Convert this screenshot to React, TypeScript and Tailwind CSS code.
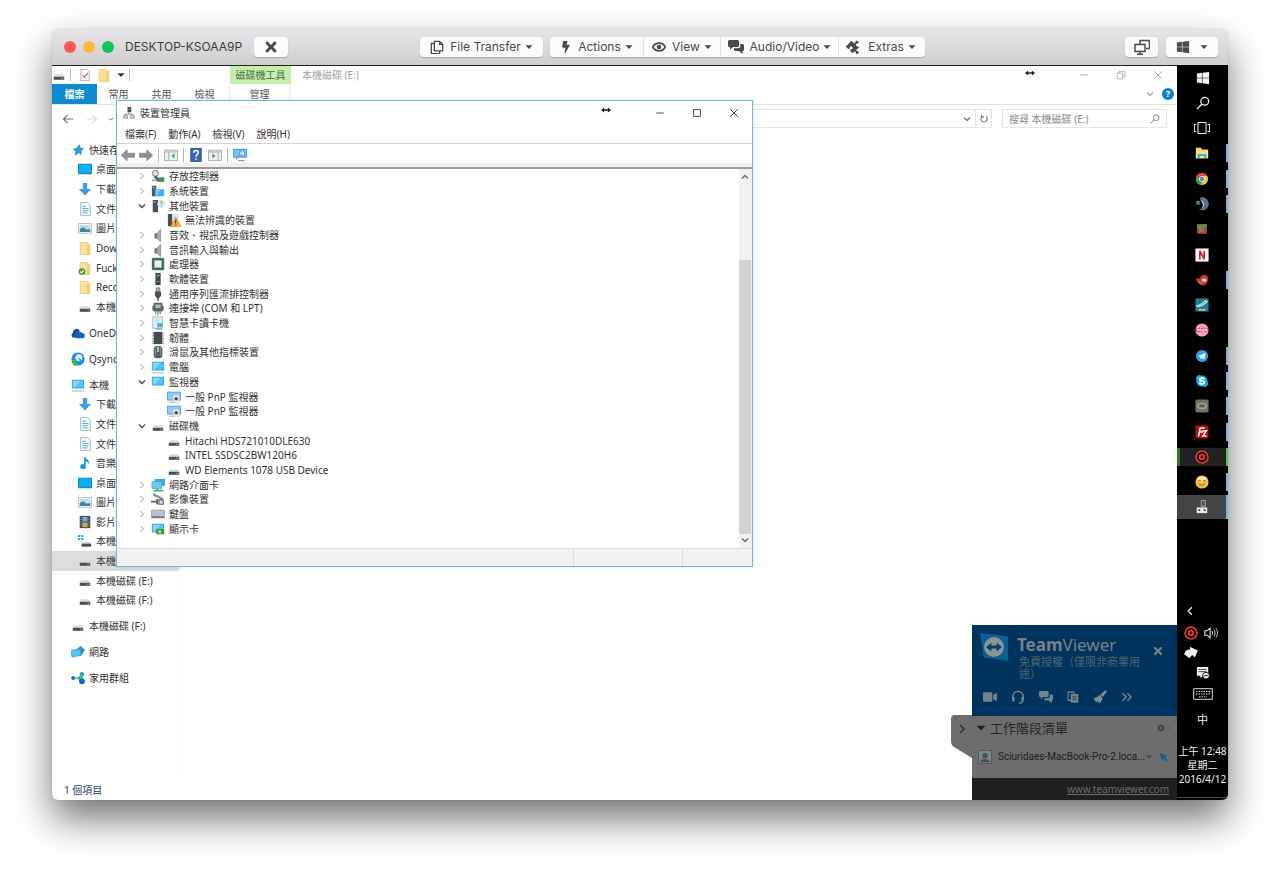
import React from "react";
import { FaBolt, FaPuzzlePiece, FaTimes, FaWindows, FaVideo, FaSkype } from "react-icons/fa";

type IconProps = { name: string; className?: string };

const screen = (
  <>
    <path d="M1 2h14v10H1z" fill="#2f9fd0" />
    <path d="M2 3h12v8H2z" fill="#56c4f2" />
    <path d="M2 3h9L4 11H2z" fill="#7fd6f8" />
  </>
);
const drive = (
  <>
    <path d="M3.500 7h9l1.500 3H2z" fill="#d8dcda" />
    <path d="M2 10h12v3.500H2z" fill="#4a504d" />
    <path d="M10.500 11h2.500v1.200h-2.500z" fill="#6fc08a" />
  </>
);
const folder = (
  <>
    <path d="M2 1h9v2h3v13H2z" fill="#f0cf76" />
    <path d="M3 2h7v13H3z" fill="#fbe29a" />
  </>
);
const page = (
  <>
    <path d="M3 .5h8l3 3v12H3z" fill="#f6fafc" stroke="#9db4c0" />
    <path d="M5 5h4M5 7.500h7M5 10h7M5 12.500h6" stroke="#3ea3d8" />
  </>
);
const speaker = (
  <>
    <path d="M4 6h3v6H4z" fill="#777" />
    <path d="M7 6l4-4.500v14L7 12z" fill="#a9adb0" stroke="#777" strokeWidth=".7" />
  </>
);
const arrowDown = <path d="M5.500 1h5v7H15l-7 7.500L1 8h4.500z" fill="#3d9ddd" />;
const redRing = (
  <>
    <circle cx="8" cy="8" r="6.800" fill="#240606" stroke="#e23b3b" strokeWidth="1.800" />
    <circle cx="8" cy="8" r="2.500" fill="none" stroke="#e23b3b" strokeWidth="1.800" />
    <path d="M8 4v1.500M8 10.500V12M4.500 6l1.300.8M10.200 9.200l1.300.8M4.500 10l1.300-.8M10.200 6.800l1.300-.8" stroke="#e23b3b" strokeWidth="1.200" />
  </>
);

const art: Record<string, React.ReactNode> = {
  star: <path d="M9.500 1l1.500 4.500 4 .5-3 3 .5 5L9 11.500 4 14.500l1-5-3.500-3L6 6z" fill="#2b9be0" />,
  desktop: (
    <>
      <path d="M0 2h16v12H0z" fill="#0a8fd0" />
      <path d="M1 3h14v9H1z" fill="#0fb0f3" />
    </>
  ),
  download: arrowDown,
  page,
  picture: (
    <>
      <path d="M.5 3h15v11H.5z" fill="#fff" stroke="#a8b4bc" />
      <path d="M2 4.500h12v8H2z" fill="#b9dcf0" />
      <path d="M2 12.500V9l4-2 4 3 4-1v3.500z" fill="#4c7f9c" />
    </>
  ),
  folder,
  folderCheck: (
    <>
      {folder}
      <circle cx="4.500" cy="12" r="3.800" fill="#2f9e3c" />
      <path d="M2.500 12l1.500 1.500L6.500 10.500" stroke="#fff" strokeWidth="1.300" fill="none" />
    </>
  ),
  drive,
  winDrive: (
    <>
      <path d="M0 1h2.500v2.500H0zM3.500 1H6v2.500H3.500zM0 4.500h2.500V7H0zM3.500 4.500H6V7H3.500z" fill="#22b5ea" />
      <path d="M5 9h8l2 2H4z" fill="#d8dcda" />
      <path d="M4 11h11v3.500H4z" fill="#4a504d" />
    </>
  ),
  onedrive: (
    <>
      <path d="M2 13a3 3 0 0 1 0-5 4.500 4.500 0 0 1 8-3L5 13z" fill="#0d4fa0" />
      <path d="M6 14a2.800 2.800 0 0 1 0-5.500 3.600 3.600 0 0 1 6.500-.5A3 3 0 0 1 13 14z" fill="#1a63b8" />
    </>
  ),
  qsync: (
    <>
      <circle cx="8" cy="8" r="7.500" fill="#1893d4" />
      <circle cx="9" cy="6.500" r="4" fill="#dff3fb" />
      <path d="M1 9h6l-2 2 3 3-3 2c-3-1-4-4-4-7z" fill="#43b449" />
      <path d="M8 6l4 3-1 3z" fill="#1893d4" />
    </>
  ),
  computer: (
    <>
      {screen}
      <path d="M1 14h14v1.500H1z" fill="#b8c4ca" />
    </>
  ),
  monitor: screen,
  music: <path d="M7 1l1.500 0c1 3 5 3.500 4 8.500-.5-2-2-3-3.500-3.200V12a3.200 2.800 0 1 1-2-2.500z" fill="#1c9ce0" />,
  film: (
    <>
      <path d="M2 1h12v14H2z" fill="#3a4148" />
      <path d="M5 2h6v5.500H5z" fill="#6fa9d6" />
      <path d="M5 8.500h6V14H5z" fill="#c9a860" />
      <path d="M3.500 2v12M12.500 2v12" stroke="#ddd" strokeDasharray="1 1.500" />
    </>
  ),
  network: (
    <>
      <path d="M6 5l5-4 5 4.500-4 6.500H7z" fill="#3c8fb8" />
      <path d="M0 6l11-1.500V12L1 14z" fill="#56c4f2" stroke="#2f8fc0" strokeWidth=".6" />
    </>
  ),
  homegroup: (
    <>
      <path d="M2.500 8h4" stroke="#27a8d8" strokeWidth="1.500" />
      <circle cx="2.500" cy="8" r="2.300" fill="#1b74c8" />
      <circle cx="12.500" cy="3.500" r="2.500" fill="#1f9ad6" />
      <path d="M6 8.500l7-6 1 10z" fill="#3fc46a" />
      <circle cx="12.500" cy="11.800" r="3.300" fill="#1668c0" />
    </>
  ),
  storage: (
    <>
      <circle cx="5" cy="5" r="3.500" fill="#dfe6e2" stroke="#65706a" />
      <path d="M3 9l3-2 2 3 7-.5v5H8z" fill="#4f6b56" />
      <path d="M9 10h6v4H9z" fill="#3d9448" />
      <path d="M1 12h6v2H1z" fill="#9aa39e" />
    </>
  ),
  system: (
    <>
      <path d="M1 2h5v12H1z" fill="#4d5a60" />
      <path d="M2 3h2v2H2z" fill="#77e090" />
      <path d="M5 6h10v8H5z" fill="#42b3ea" />
      <path d="M5 6h6l-5 8H5z" fill="#76cef5" />
    </>
  ),
  unknown: (
    <>
      <path d="M2 1h6v14H2z" fill="#495156" />
      <path d="M3 2.500h2v1.500H3z" fill="#9fe0a8" />
      <circle cx="11.500" cy="5.500" r="4" fill="#e7f1f7" stroke="#b8cad4" strokeWidth=".7" />
      <path d="M10.500 4.500c0-1.500 2.300-1.500 2.200 0 0 .8-1 .8-1 1.800M11.700 7.300v.8" stroke="#3d7fae" fill="none" strokeWidth=".9" />
    </>
  ),
  warning: (
    <>
      <path d="M1 1h5v14H1z" fill="#495156" />
      <circle cx="10" cy="4.500" r="3.800" fill="#dfeaf1" />
      <path d="M10 4.500L16 15.500H4z" fill="#f2b53a" stroke="#8a6414" strokeWidth=".5" />
      <path d="M10 8v4M10 13v1.200" stroke="#222" strokeWidth="1.200" />
    </>
  ),
  speaker,
  cpu: (
    <>
      <path d="M1.500 1.500h13v13h-13z" fill="#2f6b4c" stroke="#3f5f50" />
      <path d="M4 4h8v8H4z" fill="#eef4ee" stroke="#9db8a6" />
    </>
  ),
  software: (
    <>
      <path d="M5 1h6v14H5z" fill="#3d4748" />
      <path d="M6.500 3h3v2h-3z" fill="#72b48a" />
      <path d="M6.500 11h3" stroke="#889" />
    </>
  ),
  usb: (
    <>
      <path d="M6 1h4v4H6z" fill="#aab0b2" stroke="#555" strokeWidth=".7" />
      <path d="M4.500 5h7v5L9 13H7l-2.500-3z" fill="#4b5053" />
      <path d="M8 12v4" stroke="#4b5053" strokeWidth="1.500" />
    </>
  ),
  port: (
    <>
      <path d="M3 2h10v3l1.500 1v4l-2 2h-9l-2-2V6L3 5z" fill="#5d6365" />
      <path d="M5 4h6v4H5z" fill="#b6bcbe" />
      <path d="M5.500 12v3M8 12v4M10.500 12v3" stroke="#4b5053" />
    </>
  ),
  card: (
    <>
      <path d="M2 1h11v13H2z" fill="#e4edf1" stroke="#a9b8c0" />
      <path d="M4 3h5v4H4z" fill="#c9e0ec" />
      <path d="M7 8h6v5H7z" fill="#46b4e6" />
      <path d="M5 14h8v1.500H5z" fill="#8ea0a8" />
    </>
  ),
  firmware: (
    <>
      <path d="M3 1h10v14H3z" fill="#454c4f" />
      <path d="M1 2.500h2M13 2.500h2M1 5.500h2M13 5.500h2M1 8.500h2M13 8.500h2M1 11.500h2M13 11.500h2M1 14h2M13 14h2" stroke="#7c8487" />
    </>
  ),
  mouse: (
    <>
      <rect x="3" y="1" width="10" height="14" rx="4" fill="#596065" />
      <path d="M8 2v6" stroke="#d8e2e8" strokeWidth="1.600" />
      <path d="M5 3v9M11 3v9" stroke="#8f999f" />
    </>
  ),
  pnp: (
    <>
      <path d="M.5 2.500h15v9H.5z" fill="#8ccff0" stroke="#4b9fc9" />
      <path d="M7 6h7v8H7z" fill="#eef2f4" stroke="#a8b6be" strokeWidth=".6" />
      <circle cx="10.500" cy="10" r="2" fill="#5a3f3c" />
      <path d="M2 14h6" stroke="#9db0ba" />
    </>
  ),
  netcard: (
    <>
      <path d="M4 1h12v8H4z" fill="#3fa9de" />
      <path d="M1 4h11v8H1z" fill="#6bcaf3" stroke="#2f8fc0" strokeWidth=".6" />
      <path d="M7 12v2.500M3 14.500h11" stroke="#40b874" strokeWidth="2" />
    </>
  ),
  camera: (
    <>
      <path d="M3 1l11 6-1 2L2 4z" fill="#8b9194" />
      <path d="M0 10h6v2H0zM6 8h2v6H6z" fill="#5b6164" />
      <path d="M9 9h5v5H9z" fill="#d7dbdd" stroke="#5b6164" strokeWidth="1.200" />
    </>
  ),
  keyboard: (
    <>
      <path d="M.5 3.500h15v9H.5z" fill="#b7c1c8" stroke="#8f9ba3" strokeWidth=".8" />
      <path d="M1 10.500h14v2H1z" fill="#6f7b83" />
    </>
  ),
  display: (
    <>
      {screen}
      <path d="M6 8h9v6H6z" fill="#3f8f4a" />
      <circle cx="10" cy="11" r="2" fill="#c9d66a" />
    </>
  ),
  devmgr: (
    <>
      <path d="M6 0h5v7H6z" fill="#444a4d" />
      <path d="M8 7v3M3 11v-1.500h10V11" stroke="#777" fill="none" />
      <path d="M1 11h5v4H1zM10 11h5v4h-5z" fill="#c7cdd0" stroke="#777" strokeWidth=".7" />
      <path d="M7 3h2" stroke="#8fd0a0" />
    </>
  ),
  back: <path d="M7 2v4h8.500v4.500H7v4L.5 8.200z" fill="#8e9194" stroke="#7b7e80" strokeWidth=".8" />,
  forward: <path d="M9 2v4H.5v4.500H9v4l6.500-6.300z" fill="#8e9194" stroke="#7b7e80" strokeWidth=".8" />,
  panelLeft: (
    <>
      <path d="M.5 2.500h15v12H.5z" fill="#eef1f3" stroke="#9aa4ab" />
      <path d="M1 4.500h14M5.500 5v9" stroke="#9aa4ab" />
      <path d="M12 6v6L8.500 9z" fill="#3da64a" />
    </>
  ),
  panelRight: (
    <>
      <path d="M.5 2.500h15v12H.5z" fill="#eef1f3" stroke="#9aa4ab" />
      <path d="M1 4.500h14M11.500 5v9" stroke="#9aa4ab" />
      <path d="M5 6v6l3.500-3z" fill="#3da64a" />
    </>
  ),
  help: (
    <>
      <path d="M2 .5h12v15H2z" fill="#3a68b8" stroke="#26498c" />
      <path d="M5.500 5.500c0-3.500 5-3.500 5-.4C10.500 7.500 8 7.500 8 10M8 11.800v1.700" stroke="#fff" strokeWidth="1.700" fill="none" />
    </>
  ),
  scan: (
    <>
      <path d="M.5 1.500h15v9H.5z" fill="#6cc6ef" stroke="#3b92bd" />
      <circle cx="10.500" cy="6" r="3" fill="#b9e6fa" stroke="#5d99b5" />
      <path d="M8 8l-4.500 5M6 14.500h7" stroke="#8b9ba4" strokeWidth="1.500" />
    </>
  ),
  check: (
    <>
      <path d="M2.500.5h8l3 3v12h-11z" fill="#fff" stroke="#9a9a9a" />
      <path d="M5 8l2.500 3L12 5.500" stroke="#e0674f" strokeWidth="1.600" fill="none" />
    </>
  ),
  search: (
    <>
      <circle cx="10" cy="6" r="4.500" fill="none" stroke="currentColor" strokeWidth="1.400" />
      <path d="M6.800 9.200L1 15" stroke="currentColor" strokeWidth="1.600" />
    </>
  ),
  refresh: <path d="M11.500 4A5 5 0 1 1 4.500 4.200M4 1v4h4" stroke="currentColor" strokeWidth="1.700" fill="none" />,
  taskview: <path d="M4 2.500h8v11H4zM2.500 4.500H.5v7h2M13.500 4.500h2v7h-2" stroke="#ddd" strokeWidth="1.100" fill="none" />,
  explorer: (
    <>
      <path d="M1 2h6l1 2h7v10H1z" fill="#f7d36b" />
      <path d="M1 6h14v8H1z" fill="#fde08a" />
      <path d="M3 14V9h10v5h-2.500v-2.500h-5V14z" fill="#25b5dc" />
    </>
  ),
  chrome: (
    <>
      <circle cx="8" cy="8" r="7" fill="#f2c32e" />
      <path d="M1.900 4.600A7 7 0 0 1 14.100 4.600H8L5 9.700z" fill="#de4a3c" />
      <path d="M1.900 4.600L5 9.800 8 11l-1 3.900A7 7 0 0 1 1.900 4.600z" fill="#35a355" />
      <circle cx="8" cy="8" r="3.200" fill="#fff" />
      <circle cx="8" cy="8" r="2.500" fill="#4a8af0" />
    </>
  ),
  steam: (
    <>
      <path d="M5 1a7.500 7.500 0 1 1-1 13c6 0 7-5 1-13z" fill="#52748c" />
      <path d="M6 3.500a5 5 0 0 1 1 9.500c3-2 3-6-1-9.500z" fill="#d8e6ee" />
      <circle cx="3.500" cy="6.500" r="2.500" fill="#3c7c78" />
    </>
  ),
  block: (
    <>
      <path d="M2.500 2.500h11v11h-11z" fill="#8c5a45" />
      <path d="M2.500 2.500h11v4l-2.500-1-2 2-3-1-3.500 1z" fill="#6a8f4a" />
      <path d="M5 7h5v4H5z" fill="#b56a58" />
    </>
  ),
  netflix: (
    <>
      <path d="M.5.5h15v15H.5z" fill="#fff" />
      <path d="M5.500 13V3l5 10V3" stroke="#d81f2a" strokeWidth="2" fill="none" />
    </>
  ),
  bird: (
    <>
      <path d="M1 5c2 2 4 2 5 0 1-4 8-4 9 0s-2 9-6 9-7-4-8-9z" fill="#c93a2e" />
      <path d="M8 7c3-2 5 0 5 1.500s-3 1.500-5 .5z" fill="#f4e6e0" />
      <path d="M3 10l5 1" stroke="#f08a70" />
    </>
  ),
  tool: (
    <>
      <path d="M.5.5h15v15H.5z" fill="#1d7f8e" />
      <path d="M2 9l5-2 5-4 2 1-5 4-5 2z" stroke="#e5f4f6" strokeWidth="1.200" fill="none" />
      <path d="M4 13.500h8" stroke="#d7b99a" strokeWidth="2" />
    </>
  ),
  pink: (
    <>
      <circle cx="8" cy="8" r="7.500" fill="#f3a3c4" />
      <path d="M1 5.500h14v5H1z" fill="#e2447f" />
      <path d="M3 9.500v-3l1.500 2 1.500-2v3M8 6.500v3h1.500v-3M11.500 9.500v-3l2 3v-3" stroke="#fff" fill="none" />
    </>
  ),
  telegram: (
    <>
      <circle cx="8" cy="8" r="7" fill="#2aa6de" />
      <path d="M3.500 8L12 4.500 10.500 12 8 10l-1.500 1.500-.5-2.500z" fill="#fff" />
    </>
  ),
  gray: (
    <>
      <rect x=".5" y=".5" width="15" height="15" rx="2" fill="#6d746e" />
      <path d="M3 8c1-4 9-4 10 0-1 4-9 4-10 0z" fill="none" stroke="#9bb06f" strokeWidth="1.500" />
      <path d="M5 8.500l2-1.500L9 8.500l2-1.500" stroke="#3d4638" fill="none" />
    </>
  ),
  filezilla: (
    <>
      <path d="M.5.5h15v15H.5z" fill="#b80f0f" />
      <path d="M4 13L6 3.500h5M5 8h4M8.500 6.500H13l-4 6h4" stroke="#fff" strokeWidth="1.800" fill="none" />
    </>
  ),
  ring: redRing,
  smile: (
    <>
      <circle cx="8" cy="8" r="7.500" fill="#f2bf4a" />
      <ellipse cx="8" cy="4.500" rx="5" ry="3" fill="#fbe3a0" />
      <path d="M4 6.500h2.500M9.500 6.500H12M4.500 10c2 2.200 5 2.200 7 0" stroke="#8a5a18" strokeWidth="1.100" fill="none" />
    </>
  ),
  devmgrLight: (
    <>
      <path d="M7 .5h5v7H7z" fill="#5a5a5a" stroke="#bbb" strokeWidth=".8" />
      <path d="M2 8.500h12v6.500H2z" fill="#e8e8e8" />
      <path d="M4 10.500h2v2H4zM10 10.500h2v2h-2z" fill="#333" />
    </>
  ),
  volume: (
    <>
      <path d="M1 5.500h2.500L7 2.500v11L3.500 10.500H1z" fill="none" stroke="#eee" strokeWidth="1.200" />
      <path d="M9 5.500c1 1.500 1 3.500 0 5M11.300 4c1.800 2.500 1.800 5.500 0 8M13.500 2.500c2.500 3.500 2.500 7.500 0 11" fill="none" stroke="#eee" />
    </>
  ),
  share: <path d="M1 9c1-3 4-4.500 7-4.500L7.500 2 15 5.500 12 12l-1.500-2.500C8 9.500 7 11 6.500 13z" fill="#f2f2f2" stroke="#f2f2f2" strokeWidth="1.500" strokeLinejoin="round" />,
  note: (
    <>
      <path d="M1 1h13v10H8l-3 3v-3H1z" fill="#eee" />
      <path d="M3 4h9M3 6.500h9" stroke="#333" />
      <circle cx="11.500" cy="11" r="3.800" fill="#eee" stroke="#000" />
      <path d="M9.500 11h4" stroke="#000" />
    </>
  ),
  docs: <path d="M5 1.500h6l3.500 3.500v7.500H5zM11 1.500V5h3.500M5 4H1.500v11.500H11v-3" stroke="#4a4a4a" strokeWidth="1.500" fill="none" />,
  eye: (
    <>
      <path d="M.8 8C4 2.200 12 2.200 15.200 8 12 13.800 4 13.800.8 8z" fill="none" stroke="#4a4a4a" strokeWidth="1.900" />
      <circle cx="8" cy="8" r="2.600" fill="#4a4a4a" />
    </>
  ),
  chat: (
    <>
      <path d="M1.500 1h8A1.500 1.500 0 0 1 11 2.500v4A1.500 1.500 0 0 1 9.500 8H5L2 10.500V8H1.500A1.500 1.500 0 0 1 0 6.500v-4A1.500 1.500 0 0 1 1.500 1z" fill="currentColor" />
      <path d="M12.300 5h2.200A1.500 1.500 0 0 1 16 6.500v4a1.500 1.500 0 0 1-1.500 1.500V15L11 12H7.500A1.500 1.500 0 0 1 6 10.500V9.300h4.300a2 2 0 0 0 2-2z" fill="currentColor" />
    </>
  ),
  screens: (
    <>
      <path d="M6 5V1.500h9.500v8H12" stroke="#4a4a4a" strokeWidth="1.500" fill="none" />
      <path d="M1 5.500h10v7H1z" stroke="#4a4a4a" strokeWidth="1.500" fill="none" />
      <path d="M6 12.500V15M3 15.200h6" stroke="#4a4a4a" strokeWidth="1.500" />
    </>
  ),
  headset: (
    <>
      <path d="M2 10V7.500a6 6 0 0 1 12 0V10M13.500 11c0 2.500-2 4-4.500 4" stroke="#808a92" strokeWidth="1.500" fill="none" />
      <path d="M1 8h3v5H2zM12 8h3l-1 5h-2z" fill="#808a92" />
    </>
  ),
  files: (
    <>
      <path d="M1.500 1.500h8v11h-8z" fill="none" stroke="#808a92" strokeWidth="1.400" />
      <path d="M5 4h10v11.500H5z" fill="#808a92" />
      <path d="M7 7h6M7 9.500h6M7 12h6" stroke="#00345d" />
    </>
  ),
  brush: (
    <>
      <path d="M14 0l2 2-5 6-2.500-2.500z" fill="#808a92" />
      <path d="M7.500 5.500l3.500 3.500-1.500 4L7 15.500 5 12l-1 2.500L.5 9.500 5 8z" fill="#808a92" />
    </>
  ),
  tv: (
    <>
      <path d="M0 0l14 1.500 2 .5v14L2 14z" fill="#0a5e92" />
      <circle cx="8" cy="8" r="5.700" fill="#8d9498" />
      <path d="M3.500 8l3-2.500v1.700h3V5.500l3 2.500-3 2.500V8.800h-3v1.700z" fill="#06406c" />
    </>
  ),
  gear: (
    <>
      <circle cx="8" cy="8" r="4" fill="none" stroke="#2d4252" strokeWidth="3" />
      <path d="M8 0v3M8 13v3M0 8h3M13 8h3M2.500 2.500l2 2M11.500 11.500l2 2M2.500 13.500l2-2M11.500 4.500l2-2" stroke="#2d4252" strokeWidth="2" />
    </>
  ),
  user: (
    <>
      <path d="M.5.5h15v15H.5z" fill="#7b8484" stroke="#4c5656" />
      <circle cx="8" cy="6.500" r="3" fill="#455155" />
      <path d="M2.500 14c0-5 11-5 11 0z" fill="#455155" />
    </>
  ),
  cursor: <path d="M1 2l12 4-4 2 5 5-2 2-5-5-2 4z" fill="#0f5f96" />,
  resize: <path d="M0 8l5-4v2.700h6V4l5 4-5 4V9.300H5V12z" fill="#222" />,
  minimize: <path d="M2 8h12" stroke="currentColor" strokeWidth="1.500" />,
  maximize: <path d="M2.500 2.500h11v11h-11z" stroke="currentColor" strokeWidth="1.500" fill="none" />,
  restore: <path d="M2 5h8.500v9H2zM5 5V2h9v9h-3.500" stroke="currentColor" strokeWidth="1.400" fill="none" />,
  close: <path d="M2 2l12 12M14 2L2 14" stroke="currentColor" strokeWidth="1.600" />,
  chevDown: <path d="M2 5l6 6 6-6" stroke="currentColor" strokeWidth="2.500" fill="none" />,
  chevUp: <path d="M2 11l6-6 6 6" stroke="currentColor" strokeWidth="2.500" fill="none" />,
  chevRight: <path d="M5 2l6 6-6 6" stroke="currentColor" strokeWidth="1.800" fill="none" />,
  chevLeft: <path d="M11 2L5 8l6 6" stroke="currentColor" strokeWidth="1.800" fill="none" />,
  caret: <path d="M1 4.500h14L8 12z" fill="currentColor" />,
  arrowLeft: <path d="M15 8H2M7.500 2.500L2 8l5.500 5.500" stroke="currentColor" strokeWidth="1.600" fill="none" />,
  arrowRight: <path d="M1 8h13M8.500 2.500L14 8l-5.500 5.500" stroke="currentColor" strokeWidth="1.600" fill="none" />,
  double: <path d="M2 3l5 5-5 5M8.500 3l5 5-5 5" stroke="#808a92" strokeWidth="1.600" fill="none" />,
};

function Icon({ name, className = "size-3.5" }: IconProps) {
  return (
    <svg viewBox="0 0 16 16" aria-hidden="true" className={`shrink-0 ${className}`}>
      {art[name]}
    </svg>
  );
}

const toolButton = "flex h-5 items-center justify-center bg-[#fbfbfb] text-[12px] text-[#4a4a4a]";

function ToolMenu({ icon, label, className }: { icon: React.ReactNode; label: string; className: string }) {
  return (
    <button type="button" className={`${toolButton} ${className}`}>
      {icon}
      <span className="ml-1.5">{label}</span>
      <Icon name="caret" className="ml-1 size-2" />
    </button>
  );
}

function TitleBar() {
  return (
    <header className="flex h-9 items-center bg-linear-to-b from-[#e7e5e7] to-[#cfcdcf] font-['Inter','Noto_Sans_CJK_TC',sans-serif]">
      <div className="flex w-[368px] items-center">
        <div className="ml-3 flex gap-[7px]">
          <button type="button" aria-label="Close window" className="size-3 rounded-full bg-[#fc5753]" />
          <button type="button" aria-label="Minimize window" className="size-3 rounded-full bg-[#fdb73e]" />
          <button type="button" aria-label="Zoom window" className="size-3 rounded-full bg-[#13c550]" />
        </div>
        <h1 className="ml-[11px] w-[129px] text-[12px] whitespace-nowrap text-[#3c3c3c]">DESKTOP-KSOAA9P</h1>
        <button type="button" aria-label="Disconnect" className={`${toolButton} w-[34px] rounded-sm shadow-[0_1px_1px_rgba(0,0,0,0.2)]`}>
          <FaTimes className="size-4" />
        </button>
      </div>
      <div className="flex gap-[7px]">
        <ToolMenu icon={<Icon name="docs" />} label="File Transfer" className="w-[123px] rounded-sm shadow-[0_1px_1px_rgba(0,0,0,0.2)]" />
        <div className="flex divide-x divide-[#e2e2e2] overflow-hidden rounded-sm shadow-[0_1px_1px_rgba(0,0,0,0.2)]">
          <ToolMenu icon={<FaBolt className="size-3" />} label="Actions" className="w-[94px]" />
          <ToolMenu icon={<Icon name="eye" />} label="View" className="w-[77px]" />
          <ToolMenu icon={<Icon name="chat" className="size-4" />} label="Audio/Video" className="w-[118px]" />
          <ToolMenu icon={<FaPuzzlePiece className="size-3.5 rotate-45" />} label="Extras" className="w-[86px]" />
        </div>
      </div>
      <div className="mr-2.5 ml-auto flex gap-2">
        <button type="button" aria-label="Monitors" className={`${toolButton} w-[33px] rounded-sm shadow-[0_1px_1px_rgba(0,0,0,0.2)]`}>
          <Icon name="screens" className="size-4" />
        </button>
        <button type="button" aria-label="Windows keys" className={`${toolButton} w-[52px] gap-2.5 rounded-sm shadow-[0_1px_1px_rgba(0,0,0,0.2)]`}>
          <FaWindows className="size-3.5" />
          <Icon name="caret" className="size-2" />
        </button>
      </div>
    </header>
  );
}

type NavEntry = { icon: string; label: string; selected?: boolean };

const quick: NavEntry[] = [
  { icon: "desktop", label: "桌面" },
  { icon: "download", label: "下載" },
  { icon: "page", label: "文件" },
  { icon: "picture", label: "圖片" },
  { icon: "folder", label: "Down" },
  { icon: "folderCheck", label: "Fuck" },
  { icon: "folder", label: "Reco" },
  { icon: "drive", label: "本機" },
];
const local: NavEntry[] = [
  { icon: "download", label: "下載" },
  { icon: "page", label: "文件" },
  { icon: "page", label: "文件" },
  { icon: "music", label: "音樂" },
  { icon: "desktop", label: "桌面" },
  { icon: "picture", label: "圖片" },
  { icon: "film", label: "影片" },
  { icon: "winDrive", label: "本機" },
  { icon: "drive", label: "本機", selected: true },
  { icon: "drive", label: "本機磁碟 (E:)" },
  { icon: "drive", label: "本機磁碟 (F:)" },
];

function NavRow({ entry, child }: { entry: NavEntry; child?: boolean }) {
  return (
    <a
      href="#"
      className={`flex items-center gap-1 whitespace-nowrap ${child ? "pl-[26px]" : "h-5 pl-[19px]"} ${entry.selected ? "bg-[#dcdcdc]" : ""}`}
    >
      <Icon name={entry.icon} />
      {entry.label}
    </a>
  );
}

function NavPane() {
  return (
    <nav className="flex w-[130px] flex-col border-r border-[#f4f4f4] pt-2 pr-0.5">
      <div className="grid h-[177px] auto-rows-fr">
        <NavRow entry={{ icon: "star", label: "快速存取" }} />
        {quick.map((e, i) => (
          <NavRow key={i} entry={e} child />
        ))}
      </div>
      <div className="my-1.5 flex flex-col gap-1.5">
        <NavRow entry={{ icon: "onedrive", label: "OneDrive" }} />
        <NavRow entry={{ icon: "qsync", label: "Qsync" }} />
      </div>
      <div className="grid h-[235px] auto-rows-fr">
        <NavRow entry={{ icon: "computer", label: "本機" }} />
        {local.map((e, i) => (
          <NavRow key={i} entry={e} child />
        ))}
      </div>
      <div className="my-1.5 flex flex-col gap-1.5">
        <NavRow entry={{ icon: "drive", label: "本機磁碟 (F:)" }} />
        <NavRow entry={{ icon: "network", label: "網路" }} />
        <NavRow entry={{ icon: "homegroup", label: "家用群組" }} />
      </div>
    </nav>
  );
}

function ExplorerWindow() {
  return (
    <section className="flex flex-1 flex-col">
      <div className="flex h-[18px] items-center">
        <Icon name="drive" className="size-3.5" />
        <span className="mr-2 ml-1 h-3 w-px bg-[#bbb]" />
        <Icon name="check" className="size-3" />
        <Icon name="folder" className="ml-1.5 size-3.5" />
        <Icon name="caret" className="ml-1.5 size-2 text-[#333]" />
        <span className="ml-1 h-3 w-px bg-[#bbb]" />
        <span className="ml-[100px] flex h-full w-[61px] items-center justify-center bg-[#c5eeae] text-[#4f6a43]">磁碟機工具</span>
        <span className="ml-[11px] text-[#a3a3a3]">本機磁碟 (E:)</span>
        <div className="mr-3.5 ml-auto flex items-center text-[#aaa]">
          <Icon name="resize" className="mr-[30px] mb-1 size-2.5" />
          <button type="button" aria-label="最小化" className="flex w-[37px] justify-center"><Icon name="minimize" className="size-2.5" /></button>
          <button type="button" aria-label="還原" className="flex w-[37px] justify-center"><Icon name="restore" className="size-2.5" /></button>
          <button type="button" aria-label="關閉" className="ml-3.5 flex justify-center"><Icon name="close" className="size-2.5" /></button>
        </div>
      </div>
      <div className="flex h-[21px] items-stretch border-b border-[#dfe5ea] text-[#555]">
        <button type="button" className="w-[45px] bg-[#0e8ad0] font-bold text-white">檔案</button>
        <button type="button" className="w-[43px]">常用</button>
        <button type="button" className="w-[43px]">共用</button>
        <button type="button" className="w-[43px]">檢視</button>
        <button type="button" className="ml-[3px] w-[61px] border-x border-[#e8ece6]">管理</button>
        <div className="mr-[3px] ml-auto flex items-center gap-2">
          <Icon name="chevDown" className="size-2 text-[#aaa]" />
          <button type="button" aria-label="說明" className="flex size-3 items-center justify-center rounded-full bg-[#0f7fc7] text-[9px] font-bold text-white">?</button>
        </div>
      </div>
      <div className="flex h-[27px] items-center pr-2.5 text-[#777]">
        <button type="button" aria-label="上一頁" className="ml-2.5"><Icon name="arrowLeft" className="size-3" /></button>
        <button type="button" aria-label="下一頁" className="ml-3 text-[#ddd]"><Icon name="arrowRight" className="size-3" /></button>
        <Icon name="chevDown" className="ml-2.5 size-1.5" />
        <div className="ml-3 flex h-[19px] flex-1 items-center justify-end border border-[#e6e6e6]">
          <Icon name="chevDown" className="mr-1 size-2" />
          <button type="button" aria-label="重新整理" className="flex h-full w-4 items-center justify-center border-l border-[#e6e6e6]"><Icon name="refresh" className="size-2.5" /></button>
        </div>
        <label className="ml-2.5 flex h-[19px] w-[165px] items-center border border-[#e6e6e6] px-1.5">
          <input type="text" aria-label="搜尋" placeholder="搜尋 本機磁碟 (E:)" className="min-w-0 flex-1 outline-none placeholder:text-[#8a8a8a]" />
          <Icon name="search" className="size-2.5" />
        </label>
      </div>
      <div className="flex flex-1">
        <NavPane />
        <main className="flex-1" />
      </div>
      <footer className="flex h-[20px] items-center pl-3 text-[#2b4468]">1 個項目</footer>
    </section>
  );
}

type Device = { icon: string; label: string; open?: boolean; child?: boolean };

const devices: Device[] = [
  { icon: "storage", label: "存放控制器" },
  { icon: "system", label: "系統裝置" },
  { icon: "unknown", label: "其他裝置", open: true },
  { icon: "warning", label: "無法辨識的裝置", child: true },
  { icon: "speaker", label: "音效、視訊及遊戲控制器" },
  { icon: "speaker", label: "音訊輸入與輸出" },
  { icon: "cpu", label: "處理器" },
  { icon: "software", label: "軟體裝置" },
  { icon: "usb", label: "通用序列匯流排控制器" },
  { icon: "port", label: "連接埠 (COM 和 LPT)" },
  { icon: "card", label: "智慧卡讀卡機" },
  { icon: "firmware", label: "韌體" },
  { icon: "mouse", label: "滑鼠及其他指標裝置" },
  { icon: "computer", label: "電腦" },
  { icon: "monitor", label: "監視器", open: true },
  { icon: "pnp", label: "一般 PnP 監視器", child: true },
  { icon: "pnp", label: "一般 PnP 監視器", child: true },
  { icon: "drive", label: "磁碟機", open: true },
  { icon: "drive", label: "Hitachi HDS721010DLE630", child: true },
  { icon: "drive", label: "INTEL SSDSC2BW120H6", child: true },
  { icon: "drive", label: "WD Elements 1078 USB Device", child: true },
  { icon: "netcard", label: "網路介面卡" },
  { icon: "camera", label: "影像裝置" },
  { icon: "keyboard", label: "鍵盤" },
  { icon: "display", label: "顯示卡" },
];

function DeviceManager() {
  return (
    <section className="absolute top-[34px] left-16 flex h-[467px] w-[637px] flex-col border border-[#6cbbdc] bg-white text-[#333] shadow-[0_0_4px_rgba(0,0,0,0.12)]">
      <div className="flex h-6 items-center">
        <Icon name="devmgr" className="ml-1.5 size-3" />
        <h2 className="ml-[5px]">裝置管理員</h2>
        <div className="ml-auto flex items-center text-[#444]">
          <Icon name="resize" className="mr-[30px] mb-1.5 size-2.5" />
          <button type="button" aria-label="最小化" className="flex w-[37px] justify-center"><Icon name="minimize" className="size-2.5" /></button>
          <button type="button" aria-label="最大化" className="flex w-[37px] justify-center"><Icon name="maximize" className="size-2.5" /></button>
          <button type="button" aria-label="關閉" className="flex w-[37px] justify-center"><Icon name="close" className="size-2.5" /></button>
        </div>
      </div>
      <div className="flex h-[19px] items-center gap-3 border-b border-[#d5d5d5] pl-2">
        <button type="button">檔案(F)</button>
        <button type="button">動作(A)</button>
        <button type="button">檢視(V)</button>
        <button type="button">說明(H)</button>
      </div>
      <div className="flex h-[19px] items-center pt-0.5 pl-1">
        <button type="button" aria-label="上一步"><Icon name="back" /></button>
        <button type="button" aria-label="下一步" className="ml-1"><Icon name="forward" /></button>
        <span className="ml-[5px] h-3.5 w-px bg-[#b5b5b5]" />
        <button type="button" aria-label="顯示主控台樹狀目錄" className="ml-[5px]"><Icon name="panelLeft" /></button>
        <span className="ml-[5px] h-3.5 w-px bg-[#b5b5b5]" />
        <button type="button" aria-label="說明" className="ml-[5px]"><Icon name="help" /></button>
        <button type="button" aria-label="顯示動作窗格" className="ml-[5px]"><Icon name="panelRight" /></button>
        <span className="ml-[5px] h-3.5 w-px bg-[#b5b5b5]" />
        <button type="button" aria-label="掃描硬體變更" className="ml-[5px]"><Icon name="scan" /></button>
      </div>
      <div className="h-1.5 border-b-2 border-[#9b9b9b] bg-[#f0f0f0]" />
      <div className="flex flex-1 border-r border-[#f0f0f0]">
        <ul className="grid h-[367px] flex-1 auto-rows-fr">
          {devices.map((d, i) => (
            <li key={i} className={`flex items-center gap-1 whitespace-nowrap ${d.child ? "pl-[50px]" : "pl-[21px]"}`}>
              {!d.child && (
                <Icon name={d.open ? "chevDown" : "chevRight"} className={d.open ? "mr-px size-2 text-[#444]" : "mr-px size-2 text-[#888]"} />
              )}
              <Icon name={d.icon} />
              {d.label}
            </li>
          ))}
        </ul>
        <div className="flex w-3 flex-col items-center bg-[#f1f1f1] py-1 text-[#666]">
          <Icon name="chevUp" className="size-2" />
          <div className="mt-[79px] mb-0.5 w-full flex-1 bg-[#d2d2d2]" />
          <Icon name="chevDown" className="size-2" />
        </div>
      </div>
      <div className="flex h-[18px] justify-end border-t border-[#dcdcdc] bg-[#f1f1f1]">
        <span className="w-[109px] border-l border-[#dcdcdc]" />
        <span className="w-[70px] border-l border-[#dcdcdc]" />
      </div>
    </section>
  );
}

function TeamViewerPanel() {
  return (
    <aside className="absolute right-0 bottom-0 flex items-end">
      <button type="button" aria-label="收合面板" className="relative mb-[41px] h-11 w-[21px]">
        <svg viewBox="0 0 21 44" aria-hidden="true" className="h-11 w-[21px]">
          <path d="M21 0H4Q0 0 0 4v22q0 4 3 6l18 11z" fill="#6d6d6d" />
          <path d="M9 10l4 4-4 4" stroke="#26333d" strokeWidth="1.500" fill="none" />
        </svg>
      </button>
      <div className="flex w-[205px] flex-col">
        <div className="flex h-[91px] flex-col bg-[#00345d] text-[#76828b]">
          <div className="flex pt-2 pl-2">
            <Icon name="tv" className="size-7" />
            <div className="ml-[9px] w-[124px]">
              <h2 className="text-[17px] leading-[23px]"><b>Team</b>Viewer</h2>
              <p className="pl-0.5 text-[11px] leading-[12px] text-[#4d6577]">免費授權（僅限非商業用途）</p>
            </div>
            <button type="button" aria-label="關閉" className="ml-[11px] flex h-9 items-center"><FaTimes className="size-3" /></button>
          </div>
          <div className="mt-auto mb-3 flex items-center gap-3.5 pl-[11px]">
            <button type="button" aria-label="視訊"><FaVideo className="size-3.5" /></button>
            <button type="button" aria-label="語音"><Icon name="headset" /></button>
            <button type="button" aria-label="聊天"><Icon name="chat" /></button>
            <button type="button" aria-label="檔案"><Icon name="files" className="size-3" /></button>
            <button type="button" aria-label="白板"><Icon name="brush" /></button>
            <button type="button" aria-label="更多"><Icon name="double" className="size-3" /></button>
          </div>
        </div>
        <div className="flex h-[62px] flex-col bg-[#6d6d6d] text-[#202020]">
          <div className="flex h-6 items-center pr-1.5 pl-1">
            <Icon name="caret" className="size-2.5" />
            <h3 className="ml-1 text-[13px] leading-4 text-[#262626]">工作階段清單</h3>
            <button type="button" aria-label="設定" className="ml-auto flex items-center gap-0.5"><Icon name="gear" className="size-2" /><Icon name="minimize" className="size-1" /></button>
          </div>
          <div className="flex flex-1 items-center pr-2 pb-1 pl-1.5">
            <Icon name="user" />
            <span className="ml-1.5 font-['Roboto',sans-serif] whitespace-nowrap">Sciuridaes-MacBook-Pro-2.loca...</span>
            <Icon name="caret" className="ml-auto size-2 text-[#505050]" />
            <Icon name="cursor" className="ml-1.5 size-2.5" />
          </div>
        </div>
        <div className="flex h-[22px] items-center justify-end bg-[#1f1f1f] pr-2">
          <a href="#" className="text-[10px] text-[#6e6e6e] underline">www.teamviewer.com</a>
        </div>
      </div>
    </aside>
  );
}

const apps: { icon: string; label: string; running?: boolean }[] = [
  { icon: "taskview", label: "工作檢視" },
  { icon: "explorer", label: "檔案總管", running: true },
  { icon: "chrome", label: "Chrome", running: true },
  { icon: "steam", label: "Steam", running: true },
  { icon: "block", label: "Minecraft" },
  { icon: "netflix", label: "Netflix" },
  { icon: "bird", label: "Bird", running: true },
  { icon: "tool", label: "Tool" },
  { icon: "pink", label: "Pink" },
  { icon: "telegram", label: "Telegram", running: true },
  { icon: "skype", label: "Skype", running: true },
  { icon: "gray", label: "Game", running: true },
  { icon: "filezilla", label: "FileZilla", running: true },
  { icon: "ring", label: "Recorder", running: true },
  { icon: "smile", label: "Smile", running: true },
  { icon: "devmgrLight", label: "裝置管理員", running: true },
];

function TaskButton({ icon, label, running }: { icon: string; label: string; running?: boolean }) {
  let look = running ? "border-[#79b7de]" : "border-transparent";
  if (icon === "ring") look = "border-[#55c455] bg-[linear-gradient(90deg,#2f7a34_3px,#222_3px)]";
  if (icon === "devmgrLight") look = "border-[#79b7de] bg-[#444]";
  return (
    <button
      type="button"
      aria-label={label}
      className={`flex w-full items-center justify-center self-center border-r-2 ${icon === "devmgrLight" ? "h-6" : "h-[18px]"} ${look}`}
    >
      {icon === "skype" ? <FaSkype className="size-3.5 rounded-full bg-[radial-gradient(#fff_45%,transparent_46%)] text-[#18aeea]" /> : <Icon name={icon} className={icon === "taskview" ? "size-4" : "size-3.5"} />}
    </button>
  );
}

function Taskbar() {
  return (
    <aside className="-mt-px flex w-[51px] flex-col bg-black text-[#f2f2f2]">
      <div className="grid h-[455px] auto-rows-fr">
        <button type="button" aria-label="開始" className="flex items-center justify-center"><FaWindows className="size-3.5" /></button>
        <button type="button" aria-label="搜尋" className="flex items-center justify-center"><Icon name="search" /></button>
        {apps.map((a, i) => (
          <TaskButton key={i} {...a} />
        ))}
      </div>
      <div className="mt-auto mb-0.5 flex flex-col items-center border-b border-[#444] pb-[11px]">
        <button type="button" aria-label="顯示隱藏的圖示" className="mb-2.5 ml-2 self-start"><Icon name="chevLeft" className="size-2.5" /></button>
        <div className="flex w-full items-center justify-between pr-2.5 pl-[7px]">
          <Icon name="ring" />
          <Icon name="volume" />
        </div>
        <Icon name="share" className="mt-1.5 ml-[7px] size-3.5 self-start" />
        <Icon name="note" className="mt-1.5 size-3.5" />
        <svg viewBox="0 0 20 12" aria-hidden="true" className="mt-2 h-3 w-5">
          <path d="M.7.7h18.600v10.600H.7z" fill="none" stroke="#ddd" />
          <path d="M3 3.500h14M3 6h14M6 8.800h8" stroke="#ddd" strokeDasharray="1.500 1" />
        </svg>
        <span className="mt-3 text-[11px] leading-4">中</span>
        <time className="mt-4 text-center text-[10px] leading-[14px] whitespace-nowrap">
          上午 12:48
          <br />
          星期二
          <br />
          2016/4/12
        </time>
      </div>
    </aside>
  );
}

export default function App() {
  return (
    <div className="flex min-h-screen flex-col bg-white px-[52px] pt-[29px] pb-[74px] font-['Noto_Sans','Noto_Sans_CJK_TC',sans-serif] text-[10px] leading-[14px] text-[#333]">
      <div className="flex flex-1 flex-col overflow-hidden rounded-md bg-[#fefefe] shadow-[0_0_1px_rgba(0,0,0,0.4),0_19px_38px_rgba(0,0,0,0.55)]">
        <TitleBar />
        <div className="flex flex-1 border-t border-[#222]">
          <div className="relative flex flex-1">
            <ExplorerWindow />
            <DeviceManager />
            <TeamViewerPanel />
          </div>
          <Taskbar />
        </div>
      </div>
    </div>
  );
}
